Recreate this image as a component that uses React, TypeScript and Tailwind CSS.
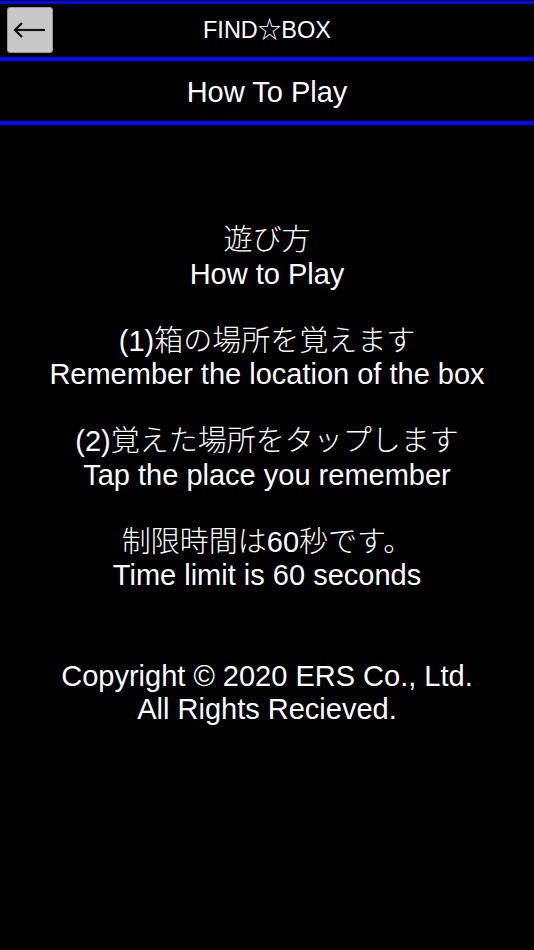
import React from "react";

const lines: string[] = [
  "遊び方",
  "How to Play",
  "",
  "(1)箱の場所を覚えます",
  "Remember the location of the box",
  "",
  "(2)覚えた場所をタップします",
  "Tap the place you remember",
  "",
  "制限時間は60秒です。",
  "Time limit is 60 seconds",
  "",
  "",
  "Copyright © 2020 ERS Co., Ltd.",
  "All Rights Recieved.",
];

const App: React.FC = () => {
  return (
    <div
      className="w-[534px] h-[950px] bg-black text-white overflow-hidden"
      style={{ fontFamily: '"Liberation Sans", Arial, "Noto Sans CJK JP", sans-serif' }}
    >
      <div className="h-px" />
      <div className="h-[3px] bg-[#0000ff]" />
      <div className="relative h-[53px] flex items-center justify-center">
        <button className="absolute left-[7px] top-[3px] w-[46px] h-[46px] bg-[#c8c8c8] border border-[#9a9a9a] rounded-[3px] flex items-center justify-center">
          <svg width="34" height="20" viewBox="0 0 34 20" fill="none">
            <path d="M2 10H32" stroke="#111" strokeWidth="2.2" />
            <path d="M9 3L2 10L9 17" stroke="#111" strokeWidth="2.2" />
          </svg>
        </button>
        <span className="text-[23.5px] leading-none">FIND☆BOX</span>
      </div>
      <div className="h-[4px] bg-[#0000ff]" />
      <div className="h-[60px] flex items-center justify-center pt-[3px]">
        <span className="text-[29px] leading-none">How To Play</span>
      </div>
      <div className="h-[4px] bg-[#0000ff]" />
      <div className="pt-[99px] flex flex-col items-center text-[29px] leading-[33.5px] font-light">
        {lines.map((line, i) => (
          <p key={i} className="h-[33.5px] whitespace-nowrap">
            {line}
          </p>
        ))}
      </div>
    </div>
  );
};

export default App;
